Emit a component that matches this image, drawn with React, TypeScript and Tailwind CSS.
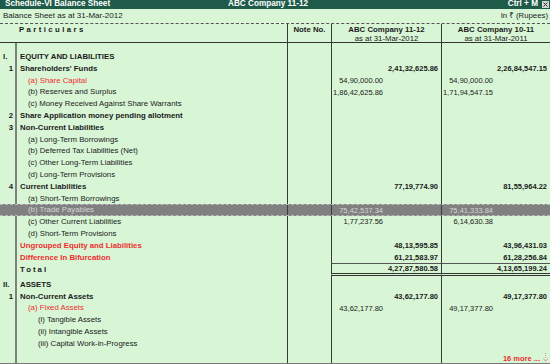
import React from "react";

type R = {
  rn?: string;
  num?: string;
  label: string;
  indent?: 0 | 1 | 2;
  bold?: boolean;
  red?: boolean;
  sub1?: string;
  main1?: string;
  sub2?: string;
  main2?: string;
  hl?: boolean;
};

const top: R[] = [
  { rn: "I.", label: "EQUITY AND LIABILITIES", bold: true },
  { num: "1", label: "Shareholders' Funds", bold: true, main1: "2,41,32,625.86", main2: "2,26,84,547.15" },
  { label: "(a) Share Capital", indent: 1, red: true, sub1: "54,90,000.00", sub2: "54,90,000.00" },
  { label: "(b) Reserves and Surplus", indent: 1, sub1: "1,86,42,625.86", sub2: "1,71,94,547.15" },
  { label: "(c) Money Received Against Share Warrants", indent: 1 },
  { num: "2", label: "Share Application money pending allotment", bold: true },
  { num: "3", label: "Non-Current Liabilities", bold: true },
  { label: "(a) Long-Term Borrowings", indent: 1 },
  { label: "(b) Deferred Tax Liabilities (Net)", indent: 1 },
  { label: "(c) Other Long-Term Liabilities", indent: 1 },
  { label: "(d) Long-Term Provisions", indent: 1 },
  { num: "4", label: "Current Liabilities", bold: true, main1: "77,19,774.90", main2: "81,55,964.22" },
  { label: "(a) Short-Term Borrowings", indent: 1 },
  { label: "(b) Trade Payables", indent: 1, hl: true, sub1: "75,42,537.34", sub2: "75,41,333.84" },
  { label: "(c) Other Current Liabilities", indent: 1, sub1: "1,77,237.56", sub2: "6,14,630.38" },
  { label: "(d) Short-Term Provisions", indent: 1 },
  { label: "Ungrouped Equity and Liabilities", bold: true, red: true, main1: "48,13,595.85", main2: "43,96,431.03" },
  { label: "Difference In Bifurcation", bold: true, red: true, main1: "61,21,583.97", main2: "61,28,256.84" },
];

const bottom: R[] = [
  { rn: "II.", label: "ASSETS", bold: true },
  { num: "1", label: "Non-Current Assets", bold: true, main1: "43,62,177.80", main2: "49,17,377.80" },
  { label: "(a) Fixed Assets", indent: 1, red: true, sub1: "43,62,177.80", sub2: "49,17,377.80" },
  { label: "(i) Tangible Assets", indent: 2 },
  { label: "(ii) Intangible Assets", indent: 2 },
  { label: "(iii) Capital Work-in-Progress", indent: 2 },
];

function Shell({
  className = "",
  c0,
  c1,
  c3,
  c4,
  c3cls = "",
  c4cls = "",
  lineCls = "border-[#3a3a3a]",
}: {
  className?: string;
  c0?: React.ReactNode;
  c1?: React.ReactNode;
  c3?: React.ReactNode;
  c4?: React.ReactNode;
  c3cls?: string;
  c4cls?: string;
  lineCls?: string;
}) {
  return (
    <div className={`grid grid-cols-[15px_272px_44px_110px_109px] ${className}`}>
      <div className="flex items-center">{c0}</div>
      <div className="flex items-center border-l-2 border-[#808080]">{c1}</div>
      <div className={`border-l ${lineCls}`}></div>
      <div className={`border-l ${lineCls} ${c3cls}`}>{c3}</div>
      <div className={`border-l ${lineCls} ${c4cls}`}>{c4}</div>
    </div>
  );
}

function Amt({ sub, main }: { sub?: string; main?: string }) {
  return (
    <div className="flex h-full items-center text-[7.5px]">
      <span className="w-[51px] shrink-0 text-right">{sub}</span>
      <span className="flex-1 pr-[3px] text-right font-bold">{main}</span>
    </div>
  );
}

function Row({ r }: { r: R }) {
  const pad = r.indent === 2 ? "pl-[21px]" : r.indent === 1 ? "pl-[11px]" : "pl-[3px]";
  const labelColor = r.hl ? "text-[#d6d6d6]" : r.red ? "text-[#ee2d2d]" : "";
  return (
    <Shell
      className={`h-[11.8px] ${r.hl ? "bg-[#808080] text-[#d6d6d6] border-y border-dashed border-[#b8b8b8]" : ""}`}
      c0={
        r.rn ? (
          <span className="pl-[3px] font-bold">{r.rn}</span>
        ) : r.num ? (
          <span className="w-full pr-[2px] text-right font-bold">{r.num}</span>
        ) : null
      }
      c1={<span className={`${pad} ${r.bold ? "font-bold" : ""} ${labelColor} whitespace-nowrap`}>{r.label}</span>}
      c3={<Amt sub={r.sub1} main={r.main1} />}
      c4={<Amt sub={r.sub2} main={r.main2} />}
    />
  );
}

export default function App() {
  return (
    <div className="flex h-[364px] w-[550px] flex-col overflow-hidden bg-[#d8f6d6] font-['Liberation_Sans','Noto_Sans','DejaVu_Sans',sans-serif] text-[7.8px] leading-none text-[#1a1a1a]">
      {/* Title bar */}
      <div className="grid h-[9px] shrink-0 grid-cols-[228px_1fr_auto] items-center bg-[#1e5b48] text-[8.2px] font-bold text-white">
        <span className="pl-[5px]">Schedule-VI Balance Sheet</span>
        <span>ABC Company 11-12</span>
        <div className="flex items-center">
          <span>Ctrl + M</span>
          <div className="ml-[4px] mr-[1px] flex h-[7px] w-[7px] items-center justify-center bg-[#d4d4d4]">
            <svg width="5" height="5" viewBox="0 0 5 5">
              <path d="M0.5 0.5 L4.5 4.5 M4.5 0.5 L0.5 4.5" stroke="#333" strokeWidth="1" />
            </svg>
          </div>
        </div>
      </div>
      {/* Subtitle */}
      <div className="flex h-[14px] shrink-0 items-center justify-between">
        <span className="pl-[3px] text-[8px]">Balance Sheet as at 31-Mar-2012</span>
        <span className="pr-[2px] text-[7.8px]">In ₹ (Rupees)</span>
      </div>
      {/* Header */}
      <div className="grid h-[20px] shrink-0 grid-cols-[287px_44px_110px_109px] border-y border-t-[#555] border-b-[#333] [border-top-style:dashed]">
        <div className="pl-[19px] pt-[2px] font-bold tracking-[2.4px]">Particulars</div>
        <div className="border-l border-[#3a3a3a] pt-[2px] text-center font-bold">Note No.</div>
        <div className="flex flex-col items-center border-l border-[#3a3a3a] pt-[2px]">
          <span className="font-bold">ABC Company 11-12</span>
          <span className="mt-[1.5px]">as at 31-Mar-2012</span>
        </div>
        <div className="flex flex-col items-center border-l border-[#3a3a3a] pt-[2px]">
          <span className="font-bold">ABC Company 10-11</span>
          <span className="mt-[1.5px]">as at 31-Mar-2011</span>
        </div>
      </div>
      {/* Body */}
      <div className="flex flex-1 flex-col border-b border-[#777]">
        <Shell className="h-[8px] shrink-0" />
        {top.map((r, i) => (
          <Row key={i} r={r} />
        ))}
        <Shell
          className="h-[12.5px] shrink-0"
          c1={<span className="pl-[3px] font-bold tracking-[2px]">Total</span>}
          c3cls="border-t border-b-[3px] border-t-[#555] border-b-[#333] [border-bottom-style:double]"
          c4cls="border-t border-b-[3px] border-t-[#555] border-b-[#333] [border-bottom-style:double]"
          c3={
            <div className="flex h-full items-center justify-end pr-[3px] text-[7.5px] font-bold">4,27,87,580.58</div>
          }
          c4={
            <div className="flex h-full items-center justify-end pr-[3px] text-[7.5px] font-bold">4,13,65,199.24</div>
          }
        />
        <Shell className="h-[3px] shrink-0" />
        {bottom.map((r, i) => (
          <Row key={i} r={r} />
        ))}
        <Shell
          className="flex-1"
          c4={
            <div className="flex h-full items-end justify-end pb-[1px] pr-[2px]">
              <span className="text-[7.5px] font-bold text-[#ee2d2d]">16 more ...</span>
              <svg width="5" height="9" viewBox="0 0 5 9" className="ml-[3px]">
                <path d="M2.5 0 V6" stroke="#d89a9a" strokeWidth="1" strokeDasharray="1 1" />
                <path d="M0.5 5.5 L2.5 8.5 L4.5 5.5" fill="none" stroke="#d89a9a" strokeWidth="1" />
              </svg>
            </div>
          }
        />
      </div>
    </div>
  );
}
